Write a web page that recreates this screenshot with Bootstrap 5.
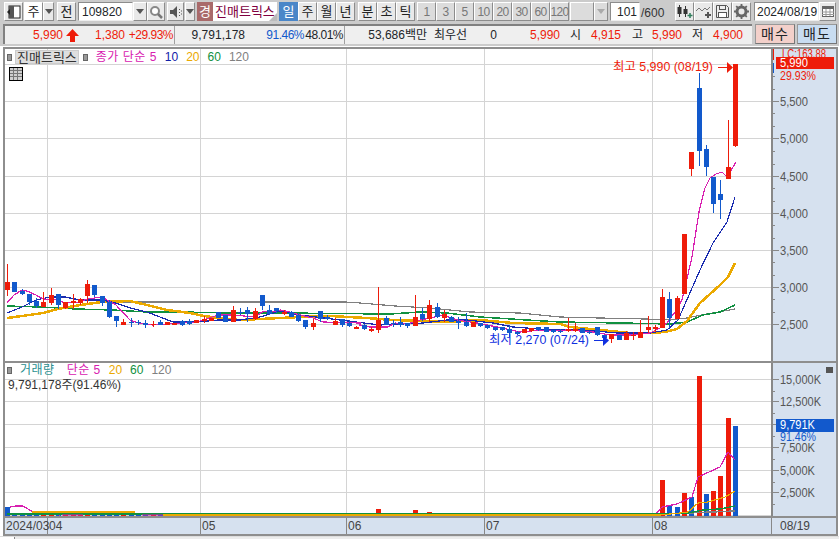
<!DOCTYPE html>
<html lang="ko">
  <head>
    <meta charset="UTF-8" />
    <meta name="viewport" content="width=device-width, initial-scale=1.0" />
    <title>진매트릭스 차트</title>
    <link href="https://cdn.jsdelivr.net/npm/bootstrap@5.3.0/dist/css/bootstrap.min.css" rel="stylesheet" />
    <style>
      html, body { background: #fff; overflow: hidden; }
      body, svg text {
        font-family: "Liberation Sans", "Noto Sans CJK KR", sans-serif;
        font-size: 12px;
        line-height: 1;
      }
      .top-area { background: #cbcbcb; height: 46px; }
      .tool-row { height: 24px; padding: 2px 0 0 4px; }
      .tb { width: 19px; height: 19px; flex: none; background: #e9e9e9; color: #222; border: 1px solid; border-color: #fff #8c8c8c #8c8c8c #fff; font-size: 13px; }
      .tb-white { background: #fff; }
      .tb-on { background: #4a86c8; color: #fff; border-color: #4a86c8; }
      .tb-off { background: #dcdcdc; color: #777; font-size: 12px; letter-spacing: -0.6px; }
      .tb-w10 { width: 10px; } .tb-w11 { width: 11px; } .tb-w14 { width: 14px; }
      .tb-w17 { width: 17px; } .tb-w18 { width: 18px; } .tb-w24 { width: 24px; }
      .tb-input { height: 19px; flex: none; background: #fff; border: 1px solid #8c8c8c; border-right-color: #eee; border-bottom-color: #eee; }
      .code-box { width: 55px; padding-left: 3px; }
      .page-box { width: 30px; padding-right: 2px; text-align: right; }
      .page-max { width: 33px; color: #333; }
      .date-box { width: 65px; padding-left: 2px; }
      .market-tag { width: 16px; height: 19px; background: #a96a6a; color: #fff; font-size: 13px; }
      .name-box { width: 64px; height: 19px; position: relative; background: #fff; color: #800040; font-size: 13px; white-space: nowrap; padding-left: 2px; }
      .name-box::after { content: ""; position: absolute; right: 0; bottom: 0; border: 4px solid transparent; border-right-color: #bbb; border-bottom-color: #bbb; }
      .ml-1px { margin-left: 1px; } .ml-2px { margin-left: 2px; } .ml-3px { margin-left: 3px; }
      .arrow-down { width: 0; height: 0; border: 4px solid transparent; border-top: 5px solid #555; border-bottom: 0; }
      .arrow-off { border-top-color: #aaa; }
      .quote-row { height: 20px; margin-left: 3px; }
      .quote-grid { width: 749px; height: 20px; background: #efefef; border: 1px solid; border-width: 2px 0 0 2px; border-color: #808080; display: grid; grid-template-columns: 58px 16px 46px 50px 70px 59px 41px 82px 40px 30px 63px 21px 40px 22px 39px 21px 40px 7px; align-items: center; }
      .quote-grid > span { text-align: right; white-space: nowrap; }
      .quote-grid > span.pct { letter-spacing: -0.5px; }
      .c-red { color: #ee1c0a; } .c-blue { color: #1259cc; }
      .sep-end { height: 18px; line-height: 18px; border-right: 1px solid #a0a0a0; padding-right: 1px; }
      .trade-btn { width: 40px; height: 20px; flex: none; border: 1px solid #999; border-right-color: #777; border-bottom-color: #777; font-size: 14px; letter-spacing: 1px; }
      .trade-buy { background: #f3d0ca; margin-left: 3px; }
      .trade-sell { background: #c9ddf1; margin-left: 2px; }
      .chart-frame { width: 835px; margin: 1px 0 0 3px; border: solid #8e8e8e; border-width: 2px 2px 0 2px; background: #fff; }
      .chart-pane { position: relative; border-bottom: 2px solid #8e8e8e; }
      .chart-pane svg, .date-axis svg { display: block; flex: none; }
      .legend-line { position: absolute; left: 2px; top: 1px; gap: 4px; white-space: nowrap; }
      .legend-dot { width: 5px; height: 7px; background: #999; border: 1px solid #666; flex: none; }
      .legend-stock { height: 14px; padding: 0 1px; background: #dedede; color: #333; font-size: 13px; margin: 0 0 0 -1px; border: 1px solid #ccc; }
      .legend-wide { letter-spacing: 0.5px; }
      .grid-btn { position: absolute; left: 4px; top: 18px; width: 14px; height: 14px; background: #fff; border: 1px solid #000; }
      .note-vol { position: absolute; left: 3px; top: 16px; color: #333; }
      .expand-btn { position: absolute; right: 3px; top: 4px; width: 7px; height: 6px; background: #555; }
      .date-axis { height: 16px; border-bottom: 2px solid #8e8e8e; background: #d6e1ef; box-sizing: content-box; }
      .scroll-strip { height: 6px; width: 100%; background: #ececec; border-top: 1px solid #ddd; }
      .scroll-cap { width: 15px; height: 6px; background: #fff; border-right: 1px solid #888; }
      .c-ma5 { color: #d820b0; } .c-ma10 { color: #1020a8; } .c-ma20 { color: #eba900; } .c-ma60 { color: #109040; } .c-ma120 { color: #808080; } .c-vol { color: #2a9090; }
    </style>
  </head>
  <body>
    <div class="top-area">
      <div class="tool-row d-flex">
        <div class="tb d-flex align-items-center justify-content-center">
          <svg width="15" height="14"><rect x="3" y="1" width="11" height="12" fill="#fff" stroke="#222"/><rect x="3" y="1" width="5" height="12" fill="#555"/><path d="M1 7l3-3v6z" fill="#222"/></svg>
        </div>
        <div class="tb tb-white ml-1px d-flex align-items-center justify-content-center">주</div>
        <div class="tb tb-w11 d-flex align-items-center justify-content-center"><span class="arrow-down"></span></div>
        <div class="tb ml-3px d-flex align-items-center justify-content-center">전</div>
        <div class="tb-input code-box ml-2px d-flex align-items-center">109820</div>
        <div class="tb tb-w14 d-flex align-items-center justify-content-center"><span class="arrow-down"></span></div>
        <div class="tb tb-w18 d-flex align-items-center justify-content-center">
          <svg width="14" height="14"><circle cx="6" cy="6" r="4" fill="#fff" stroke="#888" stroke-width="2"/><path d="M9 9l4 4" stroke="#777" stroke-width="2.5"/></svg>
        </div>
        <div class="tb tb-w17 ml-2px d-flex align-items-center justify-content-center">
          <svg width="14" height="14"><path d="M1 5h3l4-4v12l-4-4H1z" fill="#555"/><path d="M10 4h1v1h-1zM10 7h1v1h-1zM10 10h1v1h-1zM12 5.500h1v1h-1zM12 8.500h1v1h-1z" fill="#555"/></svg>
        </div>
        <div class="tb tb-w10 ml-1px d-flex align-items-center justify-content-center"><span class="arrow-down"></span></div>
        <div class="market-tag ml-2px d-flex align-items-center justify-content-center">경</div>
        <div class="name-box d-flex align-items-center">진매트릭스</div>
        <div class="tb tb-on ml-2px d-flex align-items-center justify-content-center">일</div>
        <div class="tb d-flex align-items-center justify-content-center">주</div>
        <div class="tb d-flex align-items-center justify-content-center">월</div>
        <div class="tb d-flex align-items-center justify-content-center">년</div>
        <div class="tb ml-3px d-flex align-items-center justify-content-center">분</div>
        <div class="tb d-flex align-items-center justify-content-center">초</div>
        <div class="tb d-flex align-items-center justify-content-center">틱</div>
        <div class="tb tb-off ml-2px d-flex align-items-center justify-content-center">1</div>
        <div class="tb tb-off d-flex align-items-center justify-content-center">3</div>
        <div class="tb tb-off d-flex align-items-center justify-content-center">5</div>
        <div class="tb tb-off d-flex align-items-center justify-content-center">10</div>
        <div class="tb tb-off d-flex align-items-center justify-content-center">20</div>
        <div class="tb tb-off d-flex align-items-center justify-content-center">30</div>
        <div class="tb tb-off d-flex align-items-center justify-content-center">60</div>
        <div class="tb tb-off d-flex align-items-center justify-content-center">120</div>
        <div class="tb tb-off tb-w24 ml-1px"></div>
        <div class="tb tb-off tb-w14 d-flex align-items-center justify-content-center"><span class="arrow-down arrow-off"></span></div>
        <div class="tb-input page-box ml-2px d-flex align-items-center justify-content-end">101</div>
        <div class="page-max ml-1px d-flex align-items-center">/600</div>
        <div class="tb ml-1px d-flex align-items-center justify-content-center">
          <svg width="17" height="15"><path d="M3.500 1v12M9.500 2v11" stroke="#333"/><rect x="1.500" y="3" width="4" height="7" fill="#333"/><rect x="7.500" y="5" width="4" height="5" fill="#333"/><path d="M14 9v5M11.500 11.500h5" stroke="#2e7d5b" stroke-width="1.500"/></svg>
        </div>
        <div class="tb d-flex align-items-center justify-content-center">
          <svg width="17" height="15"><path d="M1 7l3-3 3 3 3-3 2 2 3-3" fill="none" stroke="#777"/><path d="M13 8v6M10 11h6" stroke="#555" stroke-width="2"/></svg>
        </div>
        <div class="tb d-flex align-items-center justify-content-center">
          <svg width="15" height="15"><path d="M1.500 1.500h10l2 2v10h-12z" fill="#eee" stroke="#555"/><rect x="4.500" y="1.500" width="6" height="4" fill="none" stroke="#555"/><rect x="3.500" y="8.500" width="8" height="5" fill="#fff" stroke="#555"/></svg>
        </div>
        <div class="tb d-flex align-items-center justify-content-center">
          <svg width="15" height="15"><circle cx="7.500" cy="7.500" r="4.500" fill="none" stroke="#666" stroke-width="3"/><path d="M7.500 0v15M0 7.500h15M2.200 2.200l10.600 10.600M12.800 2.200L2.200 12.800" stroke="#666" stroke-width="1.800" stroke-dasharray="2.500 10"/></svg>
        </div>
        <div class="tb-input date-box ml-3px d-flex align-items-center">2024/08/19</div>
        <div class="tb tb-w17 d-flex align-items-center justify-content-center">
          <svg width="14" height="13"><rect x="1.500" y="1.500" width="11" height="10" fill="#fff" stroke="#666"/><path d="M1 2h12v2H1z" fill="#666"/><path d="M1 7h12M1 9.500h12M5 4v7M9 4v7" stroke="#999"/></svg>
        </div>
      </div>
      <div class="quote-row d-flex">
        <div class="quote-grid">
          <span class="c-red">5,990</span>
          <span><svg width="13" height="13" class="d-block ml-3px"><path d="M6.500 0L13 7H9v6H4V7H0z" fill="#ee1c0a"/></svg></span>
          <span class="c-red">1,380</span>
          <span class="c-red pct sep-end">+29.93%</span>
          <span>9,791,178</span>
          <span class="c-blue pct">91.46%</span>
          <span class="pct sep-end">48.01%</span>
          <span>53,686백만</span>
          <span>최우선</span>
          <span>0</span>
          <span class="c-red">5,990</span>
          <span>시</span>
          <span class="c-red">4,915</span>
          <span>고</span>
          <span class="c-red">5,990</span>
          <span>저</span>
          <span class="c-red">4,900</span>
          <span></span>
        </div>
        <div class="trade-btn trade-buy d-flex align-items-center justify-content-center">매수</div>
        <div class="trade-btn trade-sell d-flex align-items-center justify-content-center">매도</div>
      </div>
    </div>

    <div class="chart-frame">
      <div class="chart-pane d-flex" id="pricePane">
        <div class="legend-line d-flex align-items-center">
          <span class="legend-dot"></span>
          <span class="legend-stock d-flex align-items-center">진매트릭스</span>
          <span class="legend-dot"></span>
          <span class="c-ma5 legend-wide ms-1">종가 단순 5</span>
          <span class="c-ma10 ms-1">10</span>
          <span class="c-ma20 ms-1">20</span>
          <span class="c-ma60 ms-1">60</span>
          <span class="c-ma120 ms-1">120</span>
        </div>
        <div class="grid-btn d-flex align-items-center justify-content-center">
          <svg width="12" height="12"><rect width="12" height="12" fill="#cfcfcf"/><path d="M0 2.500h12M0 5.500h12M0 8.500h12M3.500 0v12M7.500 0v12" stroke="#777"/></svg>
        </div>
      </div>
      <div class="chart-pane d-flex" id="volPane">
        <div class="legend-line d-flex align-items-center">
          <span class="legend-dot"></span>
          <span class="c-vol legend-wide ms-1">거래량</span>
          <span class="c-ma5 legend-wide ms-2">단순 5</span>
          <span class="c-ma20 ms-1">20</span>
          <span class="c-ma60 ms-1">60</span>
          <span class="c-ma120 ms-1">120</span>
        </div>
        <div class="note-vol">9,791,178주(91.46%)</div>
        <div class="expand-btn"></div>
      </div>
      <div class="date-axis" id="dateAxis"></div>
    </div>
    <div class="scroll-strip d-flex"><div class="scroll-cap"></div></div>

    <script src="https://cdn.jsdelivr.net/npm/bootstrap@5.3.0/dist/js/bootstrap.bundle.min.js"></script>
    <script>
      const RED = "#ee1c0a", BLUE = "#1259cc", GRID = "#d4d4d4";
      const MA5 = "#d820b0", MA10 = "#1a2cb0", MA20 = "#eba900", MA60 = "#109040", MA120 = "#808080";
      const gridX = [47, 200, 346, 484, 652];
      const cx = (i) => 7 + 7.28 * i;

      // r/b, body top, body bottom, high, low (pixel y of the screenshot)
      const candles = [
        "r,282,290,264,296","b,282,292,282,292","b,291,294,289,295","b,294,302,294,305","b,301,306,298,308",
        "r,302,307,292,307","r,295,303,288,305","b,294,305,294,309","r,302,308,302,309","r,301,303,294,309",
        "r,299,303,298,305","r,284,296,280,303","b,285,295,285,297","b,296,303,296,306","b,302,317,300,318",
        "b,316,321,316,327","r,322,325,319,325","b,322,323,318,327","b,322,323,320,325","b,323,325,320,328",
        "r,324,325,321,327","b,322,325,320,325","r,322,325,322,325","r,323,325,323,325","b,321,325,320,326",
        "b,321,324,319,325","r,320,323,320,323","r,319,321,316,323","r,318,321,318,321","b,312,318,312,318",
        "b,315,322,315,322","r,310,322,306,322","b,312,313,308,315","b,310,314,307,322","r,311,319,308,320",
        "b,295,306,295,310","b,310,314,305,315","b,308,311,308,313","r,312,314,310,315","b,312,317,311,317",
        "b,315,321,313,322","b,320,327,320,329","r,323,327,319,330","b,311,319,311,322","b,317,319,315,320",
        "r,321,325,318,325","b,319,325,319,327","b,323,326,320,327","r,327,329,326,329","b,325,329,324,330",
        "r,329,331,327,332","r,320,330,287,333","b,318,325,316,325","b,323,324,320,327","b,322,325,317,327",
        "b,323,326,323,328","r,317,326,295,326","b,314,319,308,321","r,305,319,300,322","b,307,317,303,318",
        "r,314,318,310,322","b,317,322,316,322","b,321,323,317,329","b,322,326,313,327","r,322,327,322,327",
        "b,323,326,323,327","b,325,328,325,329","b,327,330,327,331","b,327,330,327,331","b,329,333,325,337",
        "b,332,334,331,335","r,329,333,329,333","r,328,331,328,332","b,327,330,327,331","b,327,332,327,332",
        "b,330,332,330,333","b,331,332,329,333","r,329,331,318,332","r,329,331,323,332","b,328,333,328,333",
        "b,332,333,331,334","b,327,335,327,336","b,335,338,335,339","r,334,339,334,343","b,335,340,335,340",
        "r,333,340,331,340","r,335,336,332,340","r,332,338,320,338","r,327,330,316,333","r,327,329,325,332",
        "r,297,328,289,328","b,299,318,292,328","r,298,319,296,319","r,234,294,234,294","r,152,169,152,176",
        "b,88,151,73,166","b,149,167,145,176","b,177,204,177,213","b,194,200,180,219","r,167,179,120,179",
        "r,64,146,64,147"
      ].map((s) => s.split(","));

      // vol bars that stand above the floor: index -> [colour, top y]
      const bigVol = {
        0: [BLUE, 507], 51: [RED, 509], 56: [RED, 510], 58: [RED, 512], 88: [RED, 513],
        90: [RED, 480], 91: [BLUE, 505], 92: [BLUE, 507], 93: [RED, 493], 94: [BLUE, 497],
        95: [RED, 376], 96: [BLUE, 494], 97: [RED, 491], 98: [RED, 476], 99: [RED, 418], 100: [BLUE, 426]
      };

      const priceLines = [
        [MA120, 1.2, "113,302 345,302 360,303 395,306 430,308 470,312 520,313 560,317 600,318 645,319 670,320 687,318 707,314 735,309"],
        [MA60, 1.5, "7,306 40,307 58,308 76,309 113,310 147,312 183,312 227,313 280,313 390,314 420,312 447,313 480,317 527,320 560,322 620,323 670,324 687,322 703,315 720,312 735,305"],
        [MA20, 2.5, "7,318 22,316 43,313 58,309 80,305 102,302 130,301 147,305 167,310 190,313 204,316 226,319 240,320 280,318 300,317 330,316 367,318 393,320 447,322 480,320 513,323 560,324 570,327 590,329 610,331 630,333 650,333 665,332 677,329 687,321 700,303 720,285 728,277 735,263"],
        [MA10, 1.2, "7,313 22,307 36,300 50,297 65,297 80,300 102,300 116,303 130,308 147,312 160,317 173,322 197,322 218,320 240,320 260,317 280,311 300,315 340,320 380,325 423,323 447,320 467,320 493,323 513,327 540,329 553,330 583,330 617,333 650,333 667,330 678,320 700,270 713,243 727,222 735,197"],
        [MA5, 1.2, "7,303 14,295 22,290 27,291 36,295 43,299 58,300 65,303 80,302 87,299 102,297 107,300 116,305 130,320 138,323 153,325 167,324 182,323 197,322 218,315 233,315 255,317 262,312 277,311 280,310 290,312 300,315 313,318 323,322 360,323 360,325 370,327 388,327 395,323 407,324 420,320 430,318 443,315 457,320 477,323 497,327 520,332 540,330 552,331 567,330 593,332 610,335 630,335 650,333 660,328 667,323 675,312 682,300 692,257 699,212 705,188 710,178 716,174 722,172 727,177 736,162"]
      ];
      const volLines = [
        [MA5, 1.2, "10,507 16,506 23,506 33,512 60,515"],
        [MA5, 1.2, "655,515 662,507 677,504 692,497 698,477 720,467 728,452 735,460"],
        [MA120, 1.5, "7,513.500 660,514 688,513 735,511"],
        [MA60, 1.5, "7,514 660,514 688,513 703,510 720,509 735,506"],
        [MA20, 1.5, "32,512 135,512"],
        [MA20, 1.2, "163,515 660,515 680,513 688,512 698,503 708,502 725,497 735,491"]
      ];

      function line(x1, y1, x2, y2, stroke, w) {
        return `<line x1="${x1}" y1="${y1}" x2="${x2}" y2="${y2}" stroke="${stroke}" stroke-width="${w || 1}"/>`;
      }
      function poly(def) {
        return `<polyline points="${def[2]}" fill="none" stroke="${def[0]}" stroke-width="${def[1]}" shape-rendering="crispEdges"/>`;
      }
      function text(x, y, s, fill, len) {
        const extra = len ? ` textLength="${len}" lengthAdjust="spacingAndGlyphs"` : "";
        return `<text x="${x}" y="${y}" fill="${fill}"${extra}>${s}</text>`;
      }
      function plotSvg(top, height, inner) {
        return `<svg width="766" height="${height}" viewBox="5 ${top} 766 ${height}">${inner}</svg>`;
      }
      function axisSvg(top, height, inner) {
        return `<svg width="65" height="${height}" viewBox="771 ${top} 65 ${height}"><rect x="771" y="${top}" width="65" height="${height}" fill="#d6e1ef"/>` +
          line(772, top, 772, top + height, "#888", 2) + inner + `</svg>`;
      }

      // 시세 패널
      let s = "";
      [64, 101, 138, 176, 213, 250, 287, 324].forEach((y) => (s += line(5, y + 0.5, 771, y + 0.5, GRID)));
      gridX.forEach((x) => (s += line(x + 0.5, 49, x + 0.5, 361, GRID)));
      priceLines.forEach((l) => (s += poly(l)));
      candles.forEach((c, i) => {
        const x = Math.round(cx(i)), col = c[0] === "r" ? RED : BLUE;
        s += `<rect x="${x}" y="${c[3]}" width="1" height="${c[4] - c[3]}" fill="${col}"/>`;
        s += `<rect x="${x - 2}" y="${c[1]}" width="5" height="${Math.max(c[2] - c[1], 1)}" fill="${col}"/>`;
      });
      s += text(613, 71, "최고 5,990 (08/19)", RED, 100);
      s += line(718, 67.5, 729, 67.5, RED) + `<path d="M727 62l6 5.500-6 5.500z" fill="${RED}"/>`;
      s += text(489, 344, "최저 2,270 (07/24)", "#1030e0", 100);
      s += line(594, 340.5, 605, 340.5, "#1030e0") + `<path d="M603 335l6 5.500-6 5.500z" fill="#1030e0"/>`;

      let a = "";
      [[5500, 101], [5000, 138], [4500, 176], [4000, 213], [3500, 250], [3000, 287], [2500, 324]].forEach((t) => {
        a += line(772, t[1] + 0.5, 779, t[1] + 0.5, "#888");
        a += line(772, t[1] - 12 + 0.5, 775, t[1] - 12 + 0.5, "#888") + line(772, t[1] - 25 + 0.5, 775, t[1] - 25 + 0.5, "#888");
        a += text(780, t[1] + 5, t[0].toLocaleString("en-US"), "#555", 28);
      });
      a += line(773.5, 49, 773.5, 60, RED) + line(773.5, 63, 773.5, 73, BLUE);
      a += text(782, 58, "LC:163.88", RED, 44);
      a += `<rect x="776" y="57" width="58" height="12" fill="${RED}"/>`;
      a += text(780, 67, "5,990", "#fff", 28) + text(780, 80, "29.93%", RED, 36);
      const pricePane = document.getElementById("pricePane");
      pricePane.insertAdjacentHTML("afterbegin", plotSvg(49, 312, s) + axisSvg(49, 312, a));

      // 거래량 패널
      let v = "";
      [379, 401, 424, 447, 470, 492, 515].forEach((y) => (v += line(5, y + 0.5, 771, y + 0.5, GRID)));
      gridX.forEach((x) => (v += line(x + 0.5, 363, x + 0.5, 516, GRID)));
      candles.forEach((c, i) => {
        const x = Math.round(cx(i)) - 2, big = bigVol[i];
        const col = big ? big[0] : c[0] === "r" ? RED : BLUE, top = big ? big[1] : 515;
        v += `<rect x="${x}" y="${top}" width="5" height="${516 - top}" fill="${col}"/>`;
      });
      volLines.forEach((l) => (v += poly(l)));
      v += line(62, 515, 83, 515, MA5) + line(142, 515, 163, 515, MA5);

      let b = "";
      [[15000, 379, 41], [12500, 401, 41], [10000, 424, 41], [7500, 447, 35], [5000, 470, 35], [2500, 492, 35]].forEach((t) => {
        b += line(772, t[1] + 0.5, 779, t[1] + 0.5, "#888");
        b += line(772, t[1] + 12 + 0.5, 775, t[1] + 12 + 0.5, "#888");
        b += text(780, t[1] + 5, t[0].toLocaleString("en-US") + "K", "#555", t[2]);
      });
      b += `<rect x="776" y="419" width="58" height="13" fill="${BLUE}"/>`;
      b += text(780, 429, "9,791K", "#fff", 35) + text(780, 441, "91.46%", BLUE, 36);
      const volPane = document.getElementById("volPane");
      volPane.insertAdjacentHTML("afterbegin", plotSvg(363, 153, v) + axisSvg(363, 153, b));

      // 날짜 축
      let d = `<svg width="831" height="16" viewBox="5 517 831 16">`;
      gridX.concat(771).forEach((x) => (d += line(x + 0.5, 517, x + 0.5, 533, "#888")));
      [[6, "2024/03"], [49, "04"], [202, "05"], [348, "06"], [486, "07"], [654, "08"], [780, "08/19"]].forEach((t) => {
        d += text(t[0], 529, t[1], "#444");
      });
      document.getElementById("dateAxis").innerHTML = d + "</svg>";
    </script>
  </body>
</html>
